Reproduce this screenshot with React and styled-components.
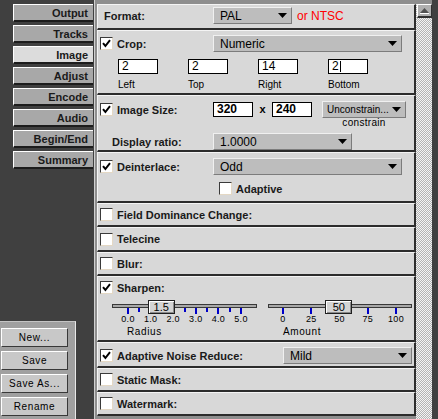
import React from 'react';
import styled, { createGlobalStyle } from 'styled-components';

const Global = createGlobalStyle`
  html, body { margin: 0; padding: 0; background: #404040; }
  body { font-family: "Liberation Sans", Arial, sans-serif; }
  #root { width: 438px; height: 419px; overflow: hidden; }
`;

const Frame = styled.div`
  width: 438px;
  height: 419px;
  display: flex;
  background: #404040;
  font-family: "Liberation Sans", Arial, sans-serif;
  color: #000;
  overflow: hidden;
`;

const LeftColumn = styled.div`
  width: 94px;
  flex: none;
  display: flex;
  flex-direction: column;
  justify-content: space-between;
`;

const TabList = styled.div`
  display: flex;
  flex-direction: column;
  gap: 3px;
  padding: 4px 0 0 13px;
`;

const Tab = styled.div`
  box-sizing: border-box;
  width: 80px;
  height: 18px;
  background: ${p => (p.$active ? '#dcdcdc' : '#a8a8a8')};
  border-top: 1px solid #ffffff;
  border-left: 1px solid #ffffff;
  border-bottom: 2px solid #1c1c1c;
  padding: 1px 5px 0 0;
  font-size: 11px;
  font-weight: bold;
  line-height: 14px;
  text-align: right;
  color: #1a1a1a;
`;

const ButtonPanel = styled.div`
  box-sizing: border-box;
  width: 76px;
  height: 98px;
  background: #a0a0a0;
  border-top: 1px solid #c4c4c4;
  border-right: 1px solid #e8e8e8;
  display: flex;
  flex-direction: column;
  gap: 4px;
  padding: 6px 0 0 1px;
`;

const PanelButton = styled.div`
  box-sizing: border-box;
  width: 67px;
  height: 19px;
  background: #c8c8c8;
  border-top: 1px solid #ffffff;
  border-left: 1px solid #ffffff;
  border-bottom: 1px solid #383838;
  border-right: 1px solid #383838;
  font-size: 10px;
  letter-spacing: 0.6px;
  line-height: 17px;
  text-align: center;
  color: #000;
`;

const Panel = styled.div`
  box-sizing: border-box;
  width: 338px;
  height: 419px;
  flex: none;
  display: flex;
  background: #8e8e8e;
  border-left: 1px solid #d0d0d0;
  padding: 4px 0 3px 2px;
`;

const Sections = styled.div`
  width: 319px;
  flex: none;
  display: flex;
  flex-direction: column;
`;

const Section = styled.div`
  box-sizing: border-box;
  height: ${p => p.$h}px;
  flex: none;
  background: #d8d8d8;
  border-top: 1px solid #f4f4f4;
  border-left: 1px solid #f4f4f4;
  border-right: 2px solid #2c2c2c;
  border-bottom: 2px solid #2c2c2c;
  display: flex;
  flex-direction: column;
  justify-content: ${p => (p.$center ? 'center' : 'flex-start')};
  padding: ${p => p.$pt || 0}px 0 0 2px;
`;

const Row = styled.div`
  display: flex;
  align-items: ${p => p.$align || 'center'};
  min-height: ${p => p.$h || 17}px;
  margin-top: ${p => p.$mt || 0}px;
`;

const LabelCell = styled.div`
  box-sizing: border-box;
  width: ${p => p.$w || 113}px;
  height: 17px;
  flex: none;
  display: flex;
  align-items: center;
  padding-left: ${p => p.$pl || 0}px;
`;

const BoldLabel = styled.span`
  font-size: 11px;
  font-weight: bold;
  color: #1a1a1a;
  white-space: nowrap;
`;

const Box = styled.span`
  box-sizing: border-box;
  width: 13px;
  height: 13px;
  flex: none;
  display: inline-flex;
  align-items: center;
  justify-content: center;
  background: #ffffff;
  border-top: 1px solid #3a3a3a;
  border-left: 1px solid #3a3a3a;
  border-bottom: 1px solid #e4d8c4;
  border-right: 1px solid #e4d8c4;
  margin-right: 4px;
  margin-left: ${p => p.$ml || 0}px;
`;

const Checkbox = ({ checked, ml }) => (
  <Box $ml={ml}>
    {checked && (
      <svg width="9" height="9" viewBox="0 0 9 9">
        <path d="M1 4.2 L3.4 7 L8 1.2" fill="none" stroke="#000" strokeWidth="2" />
      </svg>
    )}
  </Box>
);

const Drop = styled.div`
  box-sizing: border-box;
  width: ${p => p.$w}px;
  height: 17px;
  flex: none;
  margin-left: ${p => p.$ml || 0}px;
  display: flex;
  align-items: center;
  justify-content: space-between;
  gap: 2px;
  background: #bdbdbd;
  border-top: 1px solid #f0f0f0;
  border-left: 1px solid #f0f0f0;
  border-bottom: 1px solid #7c7c7c;
  border-right: 1px solid #7c7c7c;
  padding: 0 4px 0 ${p => p.$pl || 6}px;
  font-size: ${p => p.$fs || 12}px;
  color: #000;
  white-space: nowrap;
  overflow: hidden;
`;

const DropText = styled.span`
  min-width: 0;
  overflow: hidden;
`;

const Dropdown = ({ w, ml, fs, pl, children }) => (
  <Drop $w={w} $ml={ml} $fs={fs} $pl={pl}>
    <DropText>{children}</DropText>
    <svg width="9" height="5" viewBox="0 0 9 5" style={{ flex: 'none' }}>
      <polygon points="0,0 9,0 4.5,5" fill="#000" />
    </svg>
  </Drop>
);

const RedNote = styled.span`
  margin-left: 5px;
  font-size: 12px;
  color: #ff0000;
`;

const Input = styled.div`
  box-sizing: border-box;
  width: 40px;
  height: 15px;
  flex: none;
  margin-top: ${p => p.$mt || 0}px;
  background: #ffffff;
  border: 1px solid #000;
  padding-left: 3px;
  font-size: 12px;
  font-weight: ${p => (p.$bold ? 'bold' : 'normal')};
  line-height: 13px;
  display: flex;
  align-items: center;
`;

const Caret = styled.span`
  width: 1px;
  height: 11px;
  background: #000;
  margin-left: 1px;
`;

const FieldGroup = styled.div`
  display: flex;
  gap: 30px;
  margin-left: 18px;
`;

const Field = styled.div`
  display: flex;
  flex-direction: column;
`;

const SmallLabel = styled.span`
  margin-top: 5px;
  font-size: 10px;
  line-height: 12px;
  color: #000;
`;

const Times = styled.span`
  width: 19px;
  text-align: center;
  font-size: 11px;
  font-weight: bold;
  line-height: 17px;
`;

const DropCol = styled.div`
  display: flex;
  flex-direction: column;
  align-items: center;
  margin-left: 10px;
`;

const Caption = styled.span`
  font-size: 10px;
  line-height: 10px;
  letter-spacing: 0.3px;
`;

const SliderRow = styled.div`
  display: flex;
  gap: 11px;
  margin: 4px 0 0 12px;
`;

const SliderBox = styled.div`
  width: ${p => p.$w}px;
  display: flex;
  flex-direction: column;
`;

const Rail = styled.div`
  position: relative;
  height: 25px;
`;

const Track = styled.div`
  position: absolute;
  left: 0;
  right: 0;
  top: 4px;
  height: 4px;
  box-sizing: border-box;
  background: #a8a8a8;
  border: 1px solid #383838;
`;

const Tick = styled.div`
  position: absolute;
  top: 8px;
  width: 2px;
  height: ${p => (p.$major ? 6 : 4)}px;
  background: #0000c8;
`;

const TickLabel = styled.span`
  position: absolute;
  top: 13px;
  width: 30px;
  margin-left: -15px;
  text-align: center;
  font-size: 9px;
  line-height: 12px;
  letter-spacing: 0.3px;
`;

const Thumb = styled.div`
  position: absolute;
  top: 0;
  box-sizing: border-box;
  width: 27px;
  height: 14px;
  background: #d4d4d4;
  border: 1px solid #202020;
  box-shadow: inset 1px 1px #ffffff, inset -1px -1px #8a8a8a;
  font-size: 11px;
  line-height: 12px;
  text-align: center;
`;

const SliderTitle = styled.span`
  margin-top: 1px;
  padding-left: 15px;
  font-size: 10px;
  line-height: 12px;
  letter-spacing: 0.6px;
`;

const Slider = ({ w, start, unit, ticks, labels, value, thumb, title }) => {
  const pos = v => start + v * unit;
  return (
    <SliderBox $w={w}>
      <Rail>
        <Track />
        {ticks.map(t => (
          <Tick key={t.v} $major={t.major} style={{ left: pos(t.v) - 1 }} />
        ))}
        {labels.map(l => (
          <TickLabel key={l.v} style={{ left: pos(l.v) }}>{l.text}</TickLabel>
        ))}
        <Thumb style={{ left: pos(value) - 13 }}>{thumb}</Thumb>
      </Rail>
      <SliderTitle>{title}</SliderTitle>
    </SliderBox>
  );
};

const Scrollbar = styled.div`
  width: 16px;
  flex: none;
  margin-bottom: -3px;
  display: flex;
  flex-direction: column;
  background-color: #f4f4f4;
  background-image: conic-gradient(#b4b4b4 25%, #f4f4f4 0 50%, #b4b4b4 0 75%, #f4f4f4 0);
  background-size: 2px 2px;
`;

const ArrowButton = styled.div`
  box-sizing: border-box;
  width: 15px;
  height: 14px;
  margin-left: 1px;
  background: #b0b0b0;
  border-top: 1px solid #ffffff;
  border-left: 1px solid #ffffff;
  border-bottom: 2px solid #303030;
  border-right: 1px solid #303030;
  display: flex;
  align-items: center;
  justify-content: center;
`;

const RightStrip = styled.div`
  flex: 1;
  background: #404040;
`;

const tabs = ['Output', 'Tracks', 'Image', 'Adjust', 'Encode', 'Audio', 'Begin/End', 'Summary'];
const buttons = ['New...', 'Save', 'Save As...', 'Rename'];

const radiusTicks = Array.from({ length: 11 }, (_, i) => ({ v: i * 0.5, major: i % 2 === 0 }));
const radiusLabels = [0, 1, 2, 3, 4, 5].map(v => ({ v, text: v.toFixed(1) }));
const amountTicks = [0, 25, 50, 75, 100].map(v => ({ v, major: true }));
const amountLabels = [0, 25, 50, 75, 100].map(v => ({ v, text: String(v) }));

const CheckRow = ({ checked, label }) => (
  <Row>
    <Checkbox checked={checked} />
    <BoldLabel>{label}</BoldLabel>
  </Row>
);

export default function App() {
  return (
    <>
      <Global />
      <Frame>
        <LeftColumn>
          <TabList>
            {tabs.map(t => (
              <Tab key={t} $active={t === 'Image'}>{t}</Tab>
            ))}
          </TabList>
          <ButtonPanel>
            {buttons.map(b => (
              <PanelButton key={b}>{b}</PanelButton>
            ))}
          </ButtonPanel>
        </LeftColumn>

        <Panel>
          <Sections>
            <Section $h={26} $pt={2}>
              <Row>
                <LabelCell $pl={4}><BoldLabel>Format:</BoldLabel></LabelCell>
                <Dropdown w={79}>PAL</Dropdown>
                <RedNote>or NTSC</RedNote>
              </Row>
            </Section>

            <Section $h={65} $pt={4}>
              <Row>
                <LabelCell><Checkbox checked /><BoldLabel>Crop:</BoldLabel></LabelCell>
                <Dropdown w={189}>Numeric</Dropdown>
              </Row>
              <Row $mt={7} $align="flex-start">
                <FieldGroup>
                  <Field><Input>2</Input><SmallLabel>Left</SmallLabel></Field>
                  <Field><Input>2</Input><SmallLabel>Top</SmallLabel></Field>
                  <Field><Input>14</Input><SmallLabel>Right</SmallLabel></Field>
                  <Field><Input>2<Caret /></Input><SmallLabel>Bottom</SmallLabel></Field>
                </FieldGroup>
              </Row>
            </Section>

            <Section $h={57} $pt={5}>
              <Row $align="flex-start">
                <LabelCell><Checkbox checked /><BoldLabel>Image Size:</BoldLabel></LabelCell>
                <Input $bold $mt={1}>320</Input>
                <Times>x</Times>
                <Input $bold $mt={1}>240</Input>
                <DropCol>
                  <Dropdown w={84} fs={10} pl={4}>Unconstrain...</Dropdown>
                  <Caption>constrain</Caption>
                </DropCol>
              </Row>
              <Row $mt={5}>
                <LabelCell $pl={12}><BoldLabel>Display ratio:</BoldLabel></LabelCell>
                <Dropdown w={139}>1.0000</Dropdown>
              </Row>
            </Section>

            <Section $h={51} $pt={5}>
              <Row>
                <LabelCell><Checkbox checked /><BoldLabel>Deinterlace:</BoldLabel></LabelCell>
                <Dropdown w={189}>Odd</Dropdown>
              </Row>
              <Row $mt={7} $h={13}>
                <Checkbox ml={119} />
                <BoldLabel>Adaptive</BoldLabel>
              </Row>
            </Section>

            <Section $h={24} $center><CheckRow label="Field Dominance Change:" /></Section>
            <Section $h={25} $center><CheckRow label="Telecine" /></Section>
            <Section $h={24} $center><CheckRow label="Blur:" /></Section>

            <Section $h={66} $pt={2}>
              <CheckRow checked label="Sharpen:" />
              <SliderRow>
                <Slider
                  w={145}
                  start={16}
                  unit={22.6}
                  ticks={radiusTicks}
                  labels={radiusLabels}
                  value={1.45}
                  thumb="1.5"
                  title="Radius"
                />
                <Slider
                  w={144}
                  start={15}
                  unit={1.13}
                  ticks={amountTicks}
                  labels={amountLabels}
                  value={49}
                  thumb="50"
                  title="Amount"
                />
              </SliderRow>
            </Section>

            <Section $h={26} $pt={4}>
              <Row>
                <LabelCell $w={183}><Checkbox checked /><BoldLabel>Adaptive Noise Reduce:</BoldLabel></LabelCell>
                <Dropdown w={129}>Mild</Dropdown>
              </Row>
            </Section>

            <Section $h={24} $center><CheckRow label="Static Mask:" /></Section>
            <Section $h={24} $center><CheckRow label="Watermark:" /></Section>
          </Sections>

          <Scrollbar>
            <ArrowButton>
              <svg width="9" height="6" viewBox="0 0 9 6">
                <polygon points="4.5,0 9,5 0,5" fill="#505050" />
                <line x1="0" y1="5.5" x2="9" y2="5.5" stroke="#ffffff" strokeWidth="1" />
              </svg>
            </ArrowButton>
          </Scrollbar>
        </Panel>
        <RightStrip />
      </Frame>
    </>
  );
}
